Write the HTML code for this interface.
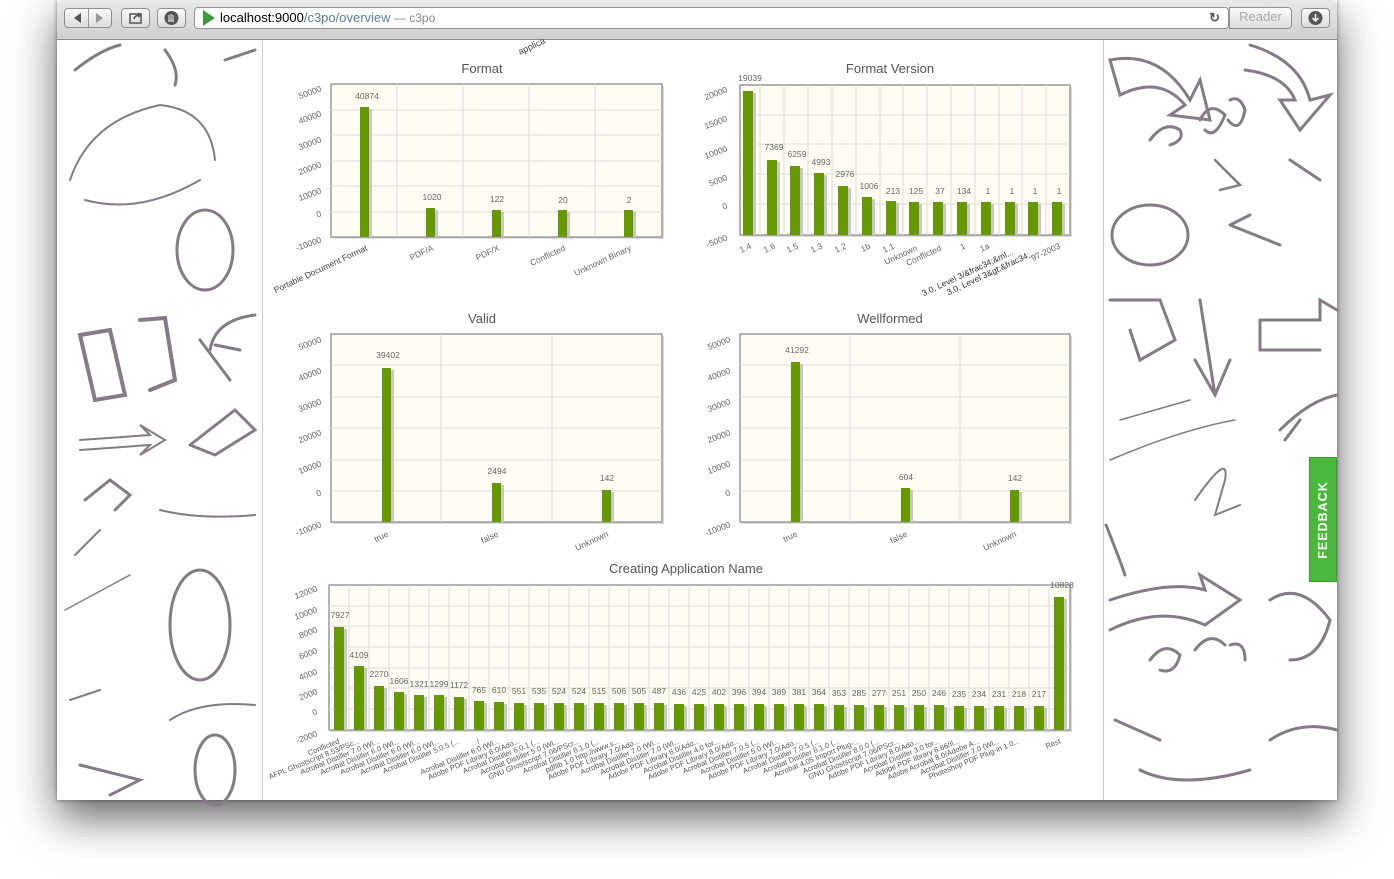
<!DOCTYPE html>
<html><head><meta charset="utf-8"><style>
html,body{margin:0;padding:0;background:#fff;width:1394px;height:879px;overflow:hidden;font-family:"Liberation Sans",sans-serif}
.win{position:absolute;left:57px;top:0;width:1280px;height:800px;background:#fff;box-shadow:0 18px 40px rgba(0,0,0,.6),0 0 4px rgba(0,0,0,.45)}
.tb{position:absolute;left:0;top:0;width:1280px;height:39px;background:linear-gradient(#e9e9e9,#cfcfcf);border-bottom:1px solid #8e8e8e;border-radius:4px 4px 0 0}
.btn{position:absolute;top:8px;height:20px;border:1px solid #8f8f8f;border-radius:4px;background:linear-gradient(#fbfbfb,#dcdcdc);box-sizing:border-box}
.url{position:absolute;left:137px;top:7px;width:1035px;height:22px;border:1px solid #939393;border-radius:4px;background:#fff;box-sizing:border-box;font-size:13px;line-height:20px;color:#000}
.fb{position:absolute;left:1309px;top:457px;width:28px;height:125px;background:#4ab83c;border:1px solid #3a9a30;box-sizing:border-box}
.fb span{position:absolute;left:50%;top:50%;transform:translate(-50%,-50%) rotate(-90deg);color:#fff;font-weight:bold;font-size:12.5px;letter-spacing:1px}
svg text{font-family:"Liberation Sans",sans-serif}
</style></head><body>
<div class="win">
<div class="tb">
 <div class="btn" style="left:7px;width:48px"><span style="position:absolute;left:9px;top:4px;width:0;height:0;border:5px solid transparent;border-right:7px solid #555;border-left:0"></span><span style="position:absolute;left:23px;top:0;width:1px;height:18px;background:#999"></span><span style="position:absolute;left:31px;top:4px;width:0;height:0;border:5px solid transparent;border-left:7px solid #999;border-right:0"></span></div>
 <div class="btn" style="left:64px;width:29px"><svg width="27" height="18" style="position:absolute;left:0;top:0"><rect x="8" y="5" width="11" height="9" fill="none" stroke="#555" stroke-width="1.5"/><path d="M12 10 Q13 6 18 6 M16 4 L19 6 L16 8" fill="none" stroke="#555" stroke-width="1.5"/></svg></div>
 <div class="btn" style="left:100px;width:29px"><svg width="27" height="18" style="position:absolute;left:0;top:0"><circle cx="13.5" cy="9" r="7" fill="#555"/><path d="M11 12 V6 M13 12 V5 M15 12 V6 M10 12 H16" stroke="#ddd" stroke-width="1.2"/></svg></div>
 <div class="url"><svg width="16" height="18" style="position:absolute;left:6px;top:1px"><path d="M2 1 L14 9 L2 17 Z" fill="#3c9a3c"/></svg><span style="position:absolute;left:25px;top:0">localhost:9000<span style="color:#5a7f9a">/c3po/overview</span><span style="color:#888;font-size:12px"> — c3po</span></span><span style="position:absolute;right:8px;top:0;color:#555;font-weight:bold">↻</span></div>
 <div class="btn" style="left:1172px;width:63px;border-radius:0 4px 4px 0;color:#aaa;font-size:13px;text-align:center;line-height:18px;top:7px;height:22px">Reader</div>
 <div class="btn" style="left:1244px;width:29px"><svg width="27" height="18" style="position:absolute;left:0;top:0"><circle cx="13.5" cy="9" r="7" fill="#555"/><path d="M13.5 5 V12 M10.5 9 L13.5 12 L16.5 9" stroke="#eee" stroke-width="1.6" fill="none"/></svg></div>
</div>
</div>

<svg width="1394" height="879" style="position:absolute;left:0;top:0" xmlns="http://www.w3.org/2000/svg">
<g fill="none" stroke="#847b86" stroke-width="3" stroke-linecap="round">
 <path d="M75 70 Q100 50 120 45 M165 50 Q180 70 175 85 M225 60 Q240 55 255 50"/>
 <path d="M70 180 Q90 120 160 105 Q210 110 215 160 M85 200 Q140 215 200 180" stroke-width="2"/>
 <ellipse cx="205" cy="250" rx="28" ry="40" stroke-width="3"/>
 <path d="M80 335 L110 330 L125 395 L95 400 Z M140 320 L165 318 L175 380 L150 390" stroke-width="4"/>
 <path d="M210 350 Q215 320 255 315 M215 345 L240 350 M200 340 L230 380" stroke-width="3"/>
 <path d="M80 440 L150 435 L140 425 L165 440 L140 455 L150 445 L80 450" stroke-width="2"/>
 <path d="M190 445 L235 410 L255 430 L215 455 L190 445" stroke-width="3"/>
 <path d="M85 500 L110 480 L130 495 L115 510" stroke-width="3"/>
 <path d="M160 510 Q200 520 255 515 M75 555 Q90 540 100 530" stroke-width="2"/>
 <path d="M65 610 L130 575" stroke-width="1.5"/>
 <ellipse cx="200" cy="625" rx="30" ry="55" stroke-width="3"/>
 <path d="M70 700 L100 690 M170 720 Q200 700 255 705"  stroke-width="2"/>
 <ellipse cx="215" cy="770" rx="20" ry="35" stroke-width="3"/>
 <path d="M80 765 L140 780 L110 795"/>
 <path d="M1110 60 Q1160 50 1190 100 L1200 80 L1210 120 L1170 115 L1185 105 Q1160 75 1120 95 Z" stroke-width="3"/>
 <path d="M1250 45 Q1300 60 1310 100 L1330 95 L1300 130 L1280 100 L1295 100 Q1285 75 1245 70"/>
 <path d="M1150 140 Q1165 120 1180 130 Q1185 140 1170 145 M1200 120 Q1210 100 1225 115 Q1215 140 1205 130 M1230 100 Q1240 95 1245 110 Q1240 135 1228 120" stroke-width="3"/>
 <path d="M1215 160 L1240 185 L1220 190" stroke-width="2.5"/>
 <ellipse cx="1150" cy="235" rx="38" ry="30" stroke-width="3"/>
 <path d="M1230 225 L1280 245 M1230 225 L1250 215 M1290 160 L1320 180"/>
 <path d="M1200 300 L1215 395 M1195 360 L1215 395 L1230 360" stroke-width="3"/>
 <path d="M1260 320 L1320 320 L1320 300 L1337 310 M1260 320 L1260 350 L1320 350" stroke-width="3"/>
 <path d="M1110 300 L1160 300 L1175 340 L1140 360 L1130 330" stroke-width="3"/>
 <path d="M1120 420 L1190 400 M1110 460 Q1180 430 1235 420" stroke-width="1.5"/>
 <path d="M1280 430 Q1310 400 1337 395 M1285 440 L1300 420" stroke-width="3"/>
 <path d="M1195 500 Q1230 450 1225 480 L1215 515 L1240 505" stroke-width="2"/>
 <path d="M1106 525 Q1120 560 1125 575" stroke-width="3"/>
 <path d="M1110 600 Q1170 580 1205 590 L1200 575 L1240 600 L1205 625 Q1160 605 1110 630" stroke-width="3"/>
 <path d="M1270 600 Q1300 580 1330 620 Q1320 660 1290 660" stroke-width="3"/>
 <path d="M1150 660 Q1165 640 1180 655 Q1175 675 1160 670 M1195 650 Q1210 630 1225 645 M1230 645 Q1245 640 1245 660" stroke-width="3"/>
 <path d="M1115 720 L1160 740 M1270 740 Q1300 720 1337 730 M1140 770 Q1180 790 1250 770" stroke-width="3"/>
</g>
<rect x="262" y="40" width="842" height="760" fill="#fff"/>
<line x1="262.5" y1="40" x2="262.5" y2="800" stroke="#ccc"/>
<line x1="1103.5" y1="40" x2="1103.5" y2="800" stroke="#ccc"/>
<text x="520" y="55" font-size="9" fill="#444" transform="rotate(-25 520 55)">applica</text>

<g font-size="8.5" fill="#666">
<text x="482" y="73" font-size="13" fill="#555" text-anchor="middle">Format</text>
<rect x="333" y="86" width="331" height="153" fill="#ddd"/>
<rect x="331" y="84" width="331" height="153" fill="#fffcf3" stroke="#999" stroke-width="1.5"/>
<g stroke="#ddd" stroke-width="1"><path d="M331 110H662M331 135H662M331 161H662M331 186H662M331 212H662M397 84V237M463 84V237M529 84V237M595 84V237"/></g>
<g fill="#c8c8c8"><rect x="363" y="109" width="9" height="128"/><rect x="429" y="210" width="9" height="27"/><rect x="495" y="212" width="9" height="25"/><rect x="561" y="212" width="9" height="25"/><rect x="627" y="212" width="9" height="25"/></g>
<g fill="#669900"><rect x="360" y="107" width="9" height="130"/><rect x="426" y="208" width="9" height="29"/><rect x="492" y="210" width="9" height="27"/><rect x="558" y="210" width="9" height="27"/><rect x="624" y="210" width="9" height="27"/></g>
<g text-anchor="middle"><text x="367" y="99">40874</text><text x="432" y="200">1020</text><text x="497" y="202">122</text><text x="563" y="203">20</text><text x="629" y="203">2</text></g>
<g text-anchor="end"><text x="322" y="91" transform="rotate(-20 322 91)">50000</text><text x="322" y="116" transform="rotate(-20 322 116)">40000</text><text x="322" y="142" transform="rotate(-20 322 142)">30000</text><text x="322" y="167" transform="rotate(-20 322 167)">20000</text><text x="322" y="193" transform="rotate(-20 322 193)">10000</text><text x="322" y="216" transform="rotate(-20 322 216)">0</text><text x="322" y="242" transform="rotate(-20 322 242)">-10000</text>
<text x="368" y="250" transform="rotate(-25 368 250)" fill="#444">Portable Document Format</text><text x="434" y="250" transform="rotate(-25 434 250)">PDF/A</text><text x="500" y="250" transform="rotate(-25 500 250)">PDF/X</text><text x="566" y="250" transform="rotate(-25 566 250)">Conflicted</text><text x="632" y="250" transform="rotate(-25 632 250)">Unknown Binary</text></g>

<text x="890" y="73" font-size="13" fill="#555" text-anchor="middle">Format Version</text>
<rect x="742" y="87" width="330" height="150" fill="#ddd"/>
<rect x="740" y="85" width="330" height="150" fill="#fffcf3" stroke="#999" stroke-width="1.5"/>
<g stroke="#ddd"><path d="M740 115H1070M740 144H1070M740 174H1070M740 204H1070M760 85V235M784 85V235M808 85V235M832 85V235M856 85V235M880 85V235M903 85V235M927 85V235M951 85V235M975 85V235M999 85V235M1022 85V235M1046 85V235"/></g>
<g fill="#c8c8c8"><rect x="746" y="93" width="10" height="142"/><rect x="770" y="162" width="10" height="73"/><rect x="793" y="168" width="10" height="67"/><rect x="817" y="175" width="10" height="60"/><rect x="841" y="188" width="10" height="47"/><rect x="865" y="199" width="10" height="36"/><rect x="889" y="203" width="10" height="32"/><rect x="912" y="204" width="10" height="31"/><rect x="936" y="204" width="10" height="31"/><rect x="960" y="204" width="10" height="31"/><rect x="984" y="204" width="10" height="31"/><rect x="1008" y="204" width="10" height="31"/><rect x="1031" y="204" width="10" height="31"/><rect x="1055" y="204" width="10" height="31"/></g>
<g fill="#669900"><rect x="743" y="91" width="10" height="144"/><rect x="767" y="160" width="10" height="75"/><rect x="790" y="166" width="10" height="69"/><rect x="814" y="173" width="10" height="62"/><rect x="838" y="186" width="10" height="49"/><rect x="862" y="197" width="10" height="38"/><rect x="886" y="201" width="10" height="34"/><rect x="909" y="202" width="10" height="33"/><rect x="933" y="202" width="10" height="33"/><rect x="957" y="202" width="10" height="33"/><rect x="981" y="202" width="10" height="33"/><rect x="1005" y="202" width="10" height="33"/><rect x="1028" y="202" width="10" height="33"/><rect x="1052" y="202" width="10" height="33"/></g>
<g text-anchor="middle"><text x="750" y="81">19039</text><text x="774" y="150">7369</text><text x="797" y="157">6259</text><text x="821" y="165">4993</text><text x="845" y="177">2976</text><text x="869" y="189">1006</text><text x="893" y="194">213</text><text x="916" y="194">125</text><text x="940" y="194">37</text><text x="964" y="194">134</text><text x="988" y="194">1</text><text x="1012" y="194">1</text><text x="1035" y="194">1</text><text x="1059" y="194">1</text></g>
<g text-anchor="end"><text x="728" y="92" transform="rotate(-20 728 92)">20000</text><text x="728" y="121" transform="rotate(-20 728 121)">15000</text><text x="728" y="151" transform="rotate(-20 728 151)">10000</text><text x="728" y="180" transform="rotate(-20 728 180)">5000</text><text x="728" y="208" transform="rotate(-20 728 208)">0</text><text x="728" y="240" transform="rotate(-20 728 240)">-5000</text>
<text x="752" y="248" transform="rotate(-25 752 248)">1.4</text><text x="776" y="248" transform="rotate(-25 776 248)">1.6</text><text x="799" y="248" transform="rotate(-25 799 248)">1.5</text><text x="823" y="248" transform="rotate(-25 823 248)">1.3</text><text x="847" y="248" transform="rotate(-25 847 248)">1.2</text><text x="871" y="248" transform="rotate(-25 871 248)">1b</text><text x="895" y="248" transform="rotate(-25 895 248)">1.1</text><text x="918" y="250" transform="rotate(-25 918 250)">Unknown</text><text x="942" y="250" transform="rotate(-25 942 250)">Conflicted</text><text x="966" y="248" transform="rotate(-25 966 248)">1</text><text x="990" y="248" transform="rotate(-25 990 248)">1a</text><text x="1014" y="254" transform="rotate(-25 1014 254)" fill="#333">3.0, Level 3/&amp;frac34;&amp;ml...</text><text x="1037" y="254" transform="rotate(-25 1037 254)" fill="#333">3.0, Level 3&amp;gt;&amp;frac34;...</text><text x="1061" y="248" transform="rotate(-25 1061 248)">97-2003</text></g>

<text x="482" y="323" font-size="13" fill="#555" text-anchor="middle">Valid</text>
<rect x="333" y="336" width="331" height="188" fill="#ddd"/>
<rect x="331" y="334" width="331" height="188" fill="#fffcf3" stroke="#999" stroke-width="1.5"/>
<g stroke="#ddd"><path d="M331 365H662M331 397H662M331 428H662M331 460H662M331 491H662M441 334V522M552 334V522"/></g>
<g fill="#c8c8c8"><rect x="385" y="370" width="9" height="152"/><rect x="495" y="485" width="9" height="37"/><rect x="605" y="492" width="9" height="30"/></g>
<g fill="#669900"><rect x="382" y="368" width="9" height="154"/><rect x="492" y="483" width="9" height="39"/><rect x="602" y="490" width="9" height="32"/></g>
<g text-anchor="middle"><text x="388" y="358">39402</text><text x="497" y="474">2494</text><text x="607" y="481">142</text></g>
<g text-anchor="end"><text x="322" y="342" transform="rotate(-20 322 342)">50000</text><text x="322" y="373" transform="rotate(-20 322 373)">40000</text><text x="322" y="404" transform="rotate(-20 322 404)">30000</text><text x="322" y="435" transform="rotate(-20 322 435)">20000</text><text x="322" y="466" transform="rotate(-20 322 466)">10000</text><text x="322" y="495" transform="rotate(-20 322 495)">0</text><text x="322" y="527" transform="rotate(-20 322 527)">-10000</text>
<text x="389" y="536" transform="rotate(-25 389 536)">true</text><text x="499" y="536" transform="rotate(-25 499 536)">false</text><text x="609" y="536" transform="rotate(-25 609 536)">Unknown</text></g>

<text x="890" y="323" font-size="13" fill="#555" text-anchor="middle">Wellformed</text>
<rect x="742" y="336" width="330" height="188" fill="#ddd"/>
<rect x="740" y="334" width="330" height="188" fill="#fffcf3" stroke="#999" stroke-width="1.5"/>
<g stroke="#ddd"><path d="M740 365H1070M740 397H1070M740 428H1070M740 460H1070M740 491H1070M850 334V522M960 334V522"/></g>
<g fill="#c8c8c8"><rect x="794" y="364" width="9" height="158"/><rect x="904" y="490" width="9" height="32"/><rect x="1013" y="492" width="9" height="30"/></g>
<g fill="#669900"><rect x="791" y="362" width="9" height="160"/><rect x="901" y="488" width="9" height="34"/><rect x="1010" y="490" width="9" height="32"/></g>
<g text-anchor="middle"><text x="797" y="353">41292</text><text x="906" y="480">604</text><text x="1015" y="481">142</text></g>
<g text-anchor="end"><text x="731" y="342" transform="rotate(-20 731 342)">50000</text><text x="731" y="373" transform="rotate(-20 731 373)">40000</text><text x="731" y="404" transform="rotate(-20 731 404)">30000</text><text x="731" y="435" transform="rotate(-20 731 435)">20000</text><text x="731" y="466" transform="rotate(-20 731 466)">10000</text><text x="731" y="495" transform="rotate(-20 731 495)">0</text><text x="731" y="527" transform="rotate(-20 731 527)">-10000</text>
<text x="798" y="536" transform="rotate(-25 798 536)">true</text><text x="908" y="536" transform="rotate(-25 908 536)">false</text><text x="1017" y="536" transform="rotate(-25 1017 536)">Unknown</text></g>

<text x="686" y="573" font-size="13" fill="#555" text-anchor="middle">Creating Application Name</text>
<rect x="331" y="587" width="741" height="145" fill="#ddd"/>
<rect x="329" y="585" width="741" height="145" fill="#fffcf3" stroke="#999" stroke-width="1.5"/>
<g stroke="#ddd"><path d="M329 606H1070M329 626H1070M329 647H1070M329 668H1070M329 688H1070M329 709H1070M349 585V730M369 585V730M389 585V730M409 585V730M429 585V730M449 585V730M469 585V730M489 585V730M509 585V730M529 585V730M549 585V730M569 585V730M589 585V730M609 585V730M629 585V730M649 585V730M669 585V730M689 585V730M709 585V730M729 585V730M749 585V730M769 585V730M789 585V730M809 585V730M829 585V730M849 585V730M869 585V730M889 585V730M909 585V730M929 585V730M949 585V730M969 585V730M989 585V730M1009 585V730M1029 585V730M1049 585V730"/></g>
<g fill="#c8c8c8" transform="translate(3 2)">
<rect x="334" y="627" width="10" height="101"/><rect x="354" y="666" width="10" height="62"/><rect x="374" y="686" width="10" height="42"/><rect x="394" y="692" width="10" height="36"/><rect x="414" y="695" width="10" height="33"/><rect x="434" y="695" width="10" height="33"/><rect x="454" y="697" width="10" height="31"/><rect x="474" y="701" width="10" height="27"/><rect x="494" y="702" width="10" height="26"/><rect x="514" y="703" width="10" height="25"/><rect x="534" y="703" width="10" height="25"/><rect x="554" y="703" width="10" height="25"/><rect x="574" y="703" width="10" height="25"/><rect x="594" y="703" width="10" height="25"/><rect x="614" y="703" width="10" height="25"/><rect x="634" y="703" width="10" height="25"/><rect x="654" y="703" width="10" height="25"/><rect x="674" y="704" width="10" height="24"/><rect x="694" y="704" width="10" height="24"/><rect x="714" y="704" width="10" height="24"/><rect x="734" y="704" width="10" height="24"/><rect x="754" y="704" width="10" height="24"/><rect x="774" y="704" width="10" height="24"/><rect x="794" y="704" width="10" height="24"/><rect x="814" y="704" width="10" height="24"/><rect x="834" y="705" width="10" height="23"/><rect x="854" y="705" width="10" height="23"/><rect x="874" y="705" width="10" height="23"/><rect x="894" y="705" width="10" height="23"/><rect x="914" y="705" width="10" height="23"/><rect x="934" y="705" width="10" height="23"/><rect x="954" y="706" width="10" height="22"/><rect x="974" y="706" width="10" height="22"/><rect x="994" y="706" width="10" height="22"/><rect x="1014" y="706" width="10" height="22"/><rect x="1034" y="706" width="10" height="22"/><rect x="1054" y="597" width="10" height="131"/>
</g>
<g fill="#669900">
<rect x="334" y="627" width="10" height="103"/><rect x="354" y="666" width="10" height="64"/><rect x="374" y="686" width="10" height="44"/><rect x="394" y="692" width="10" height="38"/><rect x="414" y="695" width="10" height="35"/><rect x="434" y="695" width="10" height="35"/><rect x="454" y="697" width="10" height="33"/><rect x="474" y="701" width="10" height="29"/><rect x="494" y="702" width="10" height="28"/><rect x="514" y="703" width="10" height="27"/><rect x="534" y="703" width="10" height="27"/><rect x="554" y="703" width="10" height="27"/><rect x="574" y="703" width="10" height="27"/><rect x="594" y="703" width="10" height="27"/><rect x="614" y="703" width="10" height="27"/><rect x="634" y="703" width="10" height="27"/><rect x="654" y="703" width="10" height="27"/><rect x="674" y="704" width="10" height="26"/><rect x="694" y="704" width="10" height="26"/><rect x="714" y="704" width="10" height="26"/><rect x="734" y="704" width="10" height="26"/><rect x="754" y="704" width="10" height="26"/><rect x="774" y="704" width="10" height="26"/><rect x="794" y="704" width="10" height="26"/><rect x="814" y="704" width="10" height="26"/><rect x="834" y="705" width="10" height="25"/><rect x="854" y="705" width="10" height="25"/><rect x="874" y="705" width="10" height="25"/><rect x="894" y="705" width="10" height="25"/><rect x="914" y="705" width="10" height="25"/><rect x="934" y="705" width="10" height="25"/><rect x="954" y="706" width="10" height="24"/><rect x="974" y="706" width="10" height="24"/><rect x="994" y="706" width="10" height="24"/><rect x="1014" y="706" width="10" height="24"/><rect x="1034" y="706" width="10" height="24"/><rect x="1054" y="597" width="10" height="133"/>
</g>
<g text-anchor="middle">
<text x="340" y="618">7927</text><text x="359" y="658">4109</text><text x="379" y="677">2270</text><text x="399" y="684">1606</text><text x="419" y="687">1321</text><text x="439" y="687">1299</text><text x="459" y="688">1172</text><text x="479" y="693">765</text><text x="499" y="693">610</text><text x="519" y="694">551</text><text x="539" y="694">535</text><text x="559" y="694">524</text><text x="579" y="694">524</text><text x="599" y="694">515</text><text x="619" y="694">506</text><text x="639" y="694">505</text><text x="659" y="694">487</text><text x="679" y="695">436</text><text x="699" y="695">425</text><text x="719" y="695">402</text><text x="739" y="695">396</text><text x="759" y="695">394</text><text x="779" y="695">389</text><text x="799" y="695">381</text><text x="819" y="695">364</text><text x="839" y="696">353</text><text x="859" y="696">285</text><text x="879" y="696">277</text><text x="899" y="696">251</text><text x="919" y="696">250</text><text x="939" y="696">246</text><text x="959" y="697">235</text><text x="979" y="697">234</text><text x="999" y="697">231</text><text x="1019" y="697">218</text><text x="1039" y="697">217</text><text x="1062" y="588">10828</text>
</g>
<g text-anchor="end">
<text x="318" y="591" transform="rotate(-20 318 591)">12000</text><text x="318" y="612" transform="rotate(-20 318 612)">10000</text><text x="318" y="632" transform="rotate(-20 318 632)">8000</text><text x="318" y="653" transform="rotate(-20 318 653)">6000</text><text x="318" y="674" transform="rotate(-20 318 674)">4000</text><text x="318" y="694" transform="rotate(-20 318 694)">2000</text><text x="318" y="714" transform="rotate(-20 318 714)">0</text><text x="318" y="736" transform="rotate(-20 318 736)">-2000</text>
</g>
<g text-anchor="end" font-size="7.5" fill="#555">
<text x="340" y="743" transform="rotate(-22 340 743)">Conflicted</text>
<text x="360" y="743" transform="rotate(-22 360 743)">AFPL Ghostscript 8.53/PSc...</text>
<text x="380" y="743" transform="rotate(-22 380 743)">Acrobat Distiller 7.0 (Wi...</text>
<text x="400" y="743" transform="rotate(-22 400 743)">Acrobat Distiller 6.0 (Wi...</text>
<text x="420" y="743" transform="rotate(-22 420 743)">Acrobat Distiller 6.0 (Wi...</text>
<text x="440" y="743" transform="rotate(-22 440 743)">Acrobat Distiller 6.0 (Wi...</text>
<text x="460" y="743" transform="rotate(-22 460 743)">Acrobat Distiller 5.0.5 (...</text>
<text x="480" y="743" transform="rotate(-22 480 743)">/</text>
<text x="500" y="743" transform="rotate(-22 500 743)">Acrobat Distiller 6.0 (Wi...</text>
<text x="520" y="743" transform="rotate(-22 520 743)">Adobe PDF Library 6.0/Ado...</text>
<text x="540" y="743" transform="rotate(-22 540 743)">Acrobat Distiller 6.0.1 (...</text>
<text x="560" y="743" transform="rotate(-22 560 743)">Acrobat Distiller 5.0 (Wi...</text>
<text x="580" y="743" transform="rotate(-22 580 743)">GNU Ghostscript 7.06/PScr...</text>
<text x="600" y="743" transform="rotate(-22 600 743)">Acrobat Distiller 8.1.0 (...</text>
<text x="620" y="743" transform="rotate(-22 620 743)">pdflib 1.0 http://www.s...</text>
<text x="640" y="743" transform="rotate(-22 640 743)">Adobe PDF Library 7.0/Ado...</text>
<text x="660" y="743" transform="rotate(-22 660 743)">Acrobat Distiller 7.0 (Wi...</text>
<text x="680" y="743" transform="rotate(-22 680 743)">Acrobat Distiller 7.0 (Wi...</text>
<text x="700" y="743" transform="rotate(-22 700 743)">Adobe PDF Library 6.0/Ado...</text>
<text x="720" y="743" transform="rotate(-22 720 743)">Acrobat Distiller 4.0 for...</text>
<text x="740" y="743" transform="rotate(-22 740 743)">Adobe PDF Library 8.0/Ado...</text>
<text x="760" y="743" transform="rotate(-22 760 743)">Acrobat Distiller 7.0.5 (...</text>
<text x="780" y="743" transform="rotate(-22 780 743)">Acrobat Distiller 5.0 (Wi...</text>
<text x="800" y="743" transform="rotate(-22 800 743)">Adobe PDF Library 7.0/Ado...</text>
<text x="820" y="743" transform="rotate(-22 820 743)">Acrobat Distiller 7.0.5 (...</text>
<text x="840" y="743" transform="rotate(-22 840 743)">Acrobat Distiller 8.1.0 (...</text>
<text x="860" y="743" transform="rotate(-22 860 743)">Acrobat 4.05 Import Plug-...</text>
<text x="880" y="743" transform="rotate(-22 880 743)">Acrobat Distiller 8.0.0 (...</text>
<text x="900" y="743" transform="rotate(-22 900 743)">GNU Ghostscript 7.06/PScr...</text>
<text x="920" y="743" transform="rotate(-22 920 743)">Adobe PDF Library 8.0/Ado...</text>
<text x="940" y="743" transform="rotate(-22 940 743)">Acrobat Distiller 3.0 for...</text>
<text x="960" y="743" transform="rotate(-22 960 743)">Adobe PDF library 6.66/Il...</text>
<text x="980" y="743" transform="rotate(-22 980 743)">Adobe Acrobat 8.0/Adobe A...</text>
<text x="1000" y="743" transform="rotate(-22 1000 743)">Acrobat Distiller 7.0 (Wi...</text>
<text x="1020" y="743" transform="rotate(-22 1020 743)">Photoshop PDF Plug-in 1.0...</text>
<text x="1061" y="743" transform="rotate(-22 1061 743)">Rest</text>
</g>
</g>
</svg>
<div class="fb"><span>FEEDBACK</span></div>
</body></html>
